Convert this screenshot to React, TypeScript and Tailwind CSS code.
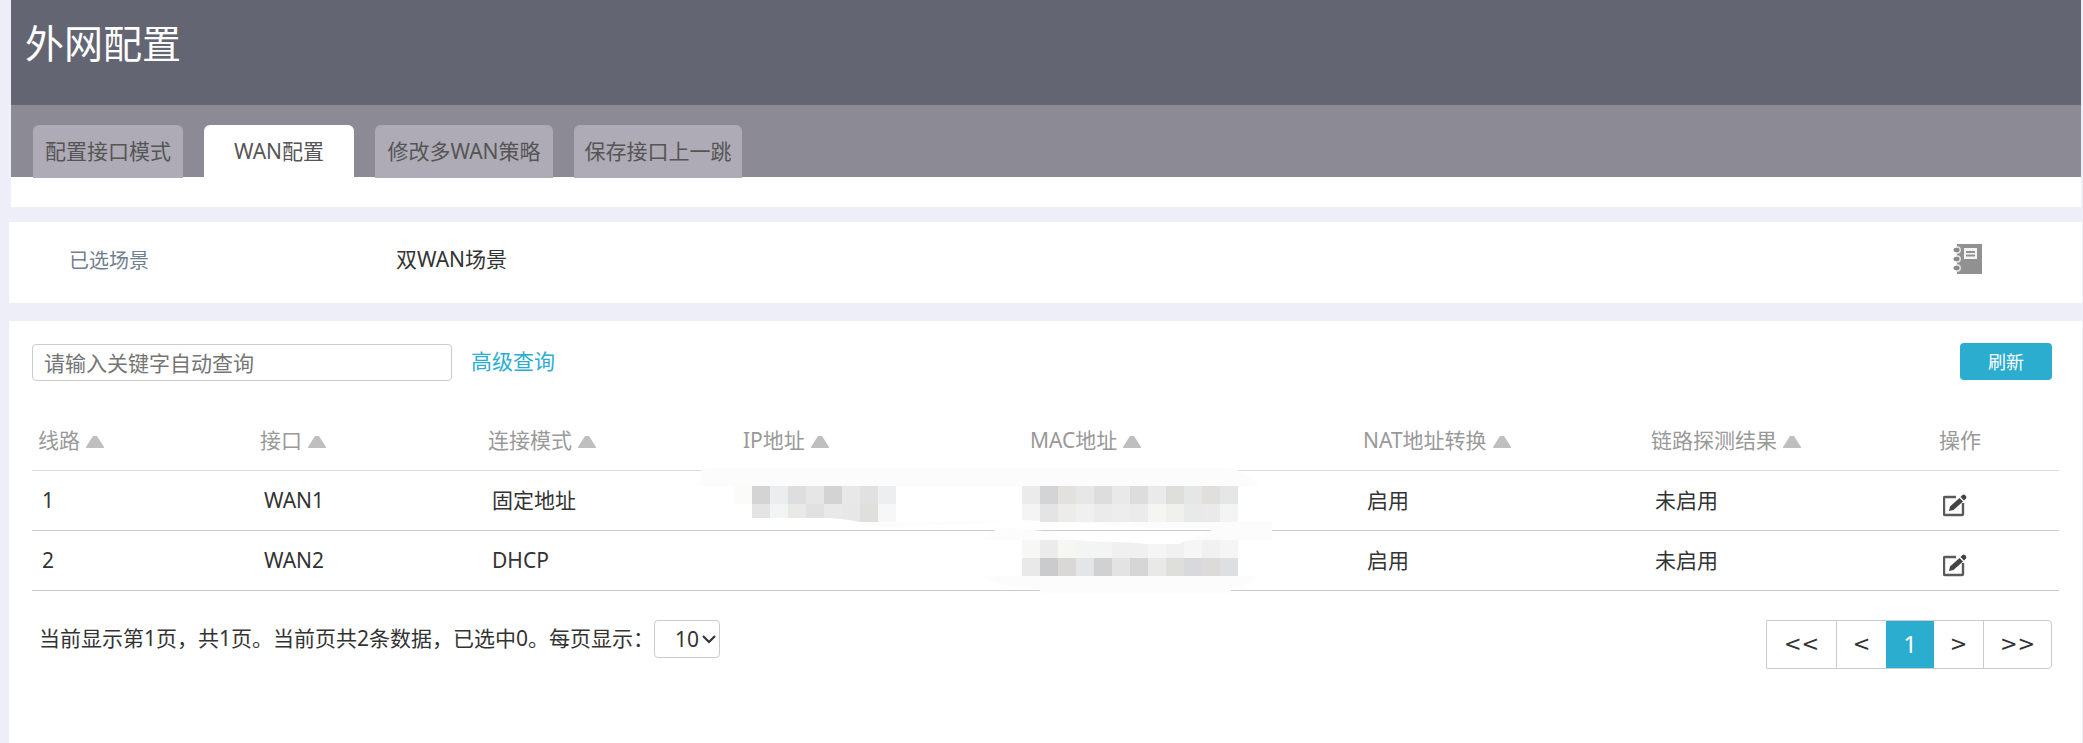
import React, { useState } from 'react';

const tabs = [
  { id: 'mode', label: '配置接口模式', width: 'w-[150px]' },
  { id: 'wan', label: 'WAN配置', width: 'w-[150px]' },
  { id: 'policy', label: '修改多WAN策略', width: 'w-[178px]' },
  { id: 'nexthop', label: '保存接口上一跳', width: 'w-[168px]' },
];

const columns = [
  { label: '线路', width: 'w-[222px]' },
  { label: '接口', width: 'w-[228px]' },
  { label: '连接模式', width: 'w-[255px]' },
  { label: 'IP地址', width: 'w-[287px]' },
  { label: 'MAC地址', width: 'w-[333px]' },
  { label: 'NAT地址转换', width: 'w-[288px]' },
  { label: '链路探测结果', width: 'w-[288px]' },
];

const rows = [
  { line: 1, port: 'WAN1', mode: '固定地址', nat: '启用', probe: '未启用' },
  { line: 2, port: 'WAN2', mode: 'DHCP', nat: '启用', probe: '未启用' },
];

const ipTiles = [
  ['#fbfcfa', '#d4d4d4', '#ebedef', '#dedede', '#e6e6e6', '#d3d3d3', '#e8e8e8', '#e1e1e1', '#edeef0'],
  ['none', '#e4e4e4', '#f2f5f4', '#e9eae8', '#e1e1e1', '#e7eae9', '#e7e7e7', '#dfdfdc', '#f7f7f7'],
];

const macTiles = [
  ['#ebebeb', '#d2d4d6', '#e3e1de', '#e7e7e7', '#dddddd', '#e9e9e9', '#dddddd', '#eaeaea', '#dededa', '#e4e7e6', '#e1dfdc', '#e5e6e8'],
  ['#f4f4f4', '#e4e4e4', '#ececea', '#f0f0f0', '#ebebeb', '#ededeb', '#ebebeb', '#f5f5f2', '#f0f0ed', '#e7eae9', '#eaeaea', '#f2f5f4'],
  ['#f7f7f5', '#ebebeb', '#f6f6f3', '#f3f5f5', '#f4f4f4', '#f0f0f0', '#f0f0f0', '#f5f5f5', '#f1f1f1', '#f6f6f6', '#f1f1f1', '#f5f5f5'],
  ['#e9e9e9', '#c9cbcc', '#dad8d6', '#e3e5e6', '#d1d1d1', '#e3e3e3', '#d6d6d6', '#e9e9e7', '#dededb', '#d7d9dc', '#dddbd9', '#dddfe1'],
];

const Tiles = ({ x, y, tiles }: { x: number; y: number; tiles: string[][] }) => (
  <g shapeRendering="crispEdges">
    {tiles.map((line, r) =>
      line.map((fill, c) => <rect key={`${r}-${c}`} x={x + c * 18} y={y + r * 18} width="18" height="18" fill={fill} />)
    )}
  </g>
);

// Hides the addresses of both rows
const AddressMask = () => (
  <svg
    className="absolute -left-10 -top-2 max-w-none pointer-events-none"
    width="580"
    height="132"
    viewBox="0 0 580 132"
    aria-hidden="true"
  >
    <g fill="#fcfcfc">
      <path d="M2 23L5 6Q20 4 60 5H530Q550 7 562 23z" />
      <path d="M163 59Q178 64 192 64L292 60 395 59H575V77H490L515 67V65H455L395 60 325 59z" />
      <path d="M286 77Q294 68 299 67L312 64 325 66 357 69Q372 72 379 77z" />
      <path d="M286 113H562Q550 124 535 126L532 130H345L342 126Q300 124 286 113z" />
    </g>
    <Tiles x={37} y={23} tiles={ipTiles} />
    <Tiles x={325} y={23} tiles={macTiles.slice(0, 2)} />
    <Tiles x={325} y={77} tiles={macTiles.slice(2)} />
    <g fill="#fff">
      <path d="M55 55H125Q145 55 163 59H55z" />
      <path d="M379 77Q400 79 415 79T452 81H482Q488 77 495 77z" />
      <path d="M325 57L343 58V59H325z" />
    </g>
  </svg>
);

const SortArrow = () => (
  <svg className="inline-block ml-1.5" width="18" height="12" viewBox="0 0 18 12" aria-hidden="true">
    <path d="M7 0h4l7 11v1H0v-1z" fill="#bfbfbf" />
  </svg>
);

const EditIcon = () => (
  <svg width="24" height="24" viewBox="0 0 24 24" aria-hidden="true">
    <path d="M13 4H2q-1 0-1 1v16q0 1 1 1h17q1 0 1-1V10" fill="none" stroke="#5a5a5a" strokeWidth="2.4" />
    <path d="M6 18l1-4.500L16.500 5l3.500 3.500L10.500 17zM17.500 4l2-2q1.500-1 3 .5t.5 3l-2 2z" fill="#444" />
  </svg>
);

const NotebookIcon = () => (
  <svg width="29" height="30" viewBox="0 0 29 30" aria-hidden="true">
    <path d="M4 0h25v30H4z" fill="#919191" />
    <path d="M11 4h13v11H11z" fill="#f4f4f4" />
    <path d="M13 8h9M13 11.500h9" stroke="#919191" strokeWidth="2" />
    {[6, 15, 24].map((cy) => (
      <g key={cy}>
        <path d={`M3 ${cy - 4}q5 0 5 4t-5 4z`} fill="#e4e4e4" />
        <ellipse cx="3.500" cy={cy} rx="3" ry="2.200" fill="#8a8a8a" />
      </g>
    ))}
  </svg>
);

const App: React.FC = () => {
  const [activeTab, setActiveTab] = useState('wan');
  const [keyword, setKeyword] = useState('');

  return (
    <div className="min-h-screen bg-[#eeeef8] flex flex-col font-['Noto_Sans','Noto_Sans_CJK_SC',sans-serif] text-[21px] leading-7 text-[#333]">
      <header className="ml-[11px] mr-0.5 bg-white pb-[30px]">
        <div className="h-[105px] bg-[#646572] px-3.5 pt-3.5">
          <h1 className="text-[39px] leading-[58px] font-normal text-white">外网配置</h1>
        </div>
        <nav className="h-[72px] bg-[#8c8a94] flex items-start gap-[21px] px-[22px] pt-5">
          {tabs.map((tab) => (
            <button
              key={tab.id}
              onClick={() => setActiveTab(tab.id)}
              className={`h-[53px] pb-0.5 shrink-0 rounded-t-md whitespace-nowrap text-[#555] ${tab.width} ${
                activeTab === tab.id ? 'bg-white' : 'bg-[#aeabb6]'
              }`}
            >
              {tab.label}
            </button>
          ))}
        </nav>
      </header>

      <section className="ml-[9px] mr-px mt-[15px] h-[81px] bg-white flex items-center pl-[60px] pr-[100px] pb-2">
        <span className="w-[327px] pt-1 text-[20px] text-[#708090]">已选场景</span>
        <span>双WAN场景</span>
        <button className="ml-auto" aria-label="场景说明">
          <NotebookIcon />
        </button>
      </section>

      <main className="ml-[9px] mr-px mt-[18px] flex-1 bg-white pl-[23px] pr-6 pt-[22px]">
        <div className="flex items-start pr-[6px]">
          <input
            type="text"
            aria-label="关键字"
            value={keyword}
            onChange={(e) => setKeyword(e.target.value)}
            placeholder="请输入关键字自动查询"
            className="mt-px w-[420px] h-[37px] px-[11px] border border-[#ccc] rounded-sm placeholder:text-[#757575]"
          />
          <a href="#advanced" className="ml-[19px] mt-1 text-[#2badd2]">高级查询</a>
          <button className="ml-auto w-[92px] h-[37px] rounded-sm bg-[#2badd0] text-lg text-white">刷新</button>
        </div>

        <table className="mt-[29px] w-full table-fixed text-left">
          <thead>
            <tr className="h-[60px] border-b border-[#ddd] text-[#999]">
              {columns.map((col) => (
                <th key={col.label} className={`pl-1.5 font-normal whitespace-nowrap ${col.width}`}>
                  {col.label}
                  <SortArrow />
                </th>
              ))}
              <th className="w-[126px] pl-1.5 font-normal">操作</th>
            </tr>
          </thead>
          <tbody>
            {rows.map((row, i) => (
              <tr key={row.line} className="h-[60px] border-b border-[#ccc]">
                <td className="pl-2.5">{row.line}</td>
                <td className="pl-2.5">{row.port}</td>
                <td className="pl-2.5">{row.mode}</td>
                <td className="relative">{i === 0 && <AddressMask />}</td>
                <td />
                <td className="pl-2.5">{row.nat}</td>
                <td className="pl-2.5">{row.probe}</td>
                <td className="pl-2.5">
                  <button className="block mt-2.5" aria-label={`编辑 ${row.port}`}>
                    <EditIcon />
                  </button>
                </td>
              </tr>
            ))}
          </tbody>
        </table>

        <div className="mt-[29px] flex items-start pl-[7px] pr-[6px]">
          <label htmlFor="page-size" className="mt-1">当前显示第1页，共1页。当前页共2条数据，已选中0。每页显示：</label>
          <div className="relative">
            <select id="page-size" className="appearance-none w-[66px] h-[38px] pl-5 border border-[#ccc] rounded-sm bg-white">
              <option>10</option>
              <option>20</option>
              <option>50</option>
            </select>
            <svg className="absolute right-1 top-3.5 pointer-events-none" width="14" height="10" viewBox="0 0 14 10" aria-hidden="true">
              <path d="M1 2l6 6 6-6" fill="none" stroke="#333" strokeWidth="2.200" />
            </svg>
          </div>
          <nav className="ml-auto flex h-[49px] border border-[#ccc] rounded-r-sm" aria-label="分页">
            <button className="w-[70px] border-r border-[#ccc] font-['DejaVu_Sans',sans-serif]">&lt;&lt;</button>
            <button className="w-[49px] font-['DejaVu_Sans',sans-serif]">&lt;</button>
            <button className="w-[48px] bg-[#2badd0] text-2xl text-white">1</button>
            <button className="w-[50px] border-r border-[#ccc] font-['DejaVu_Sans',sans-serif]">&gt;</button>
            <button className="w-[67px] font-['DejaVu_Sans',sans-serif]">&gt;&gt;</button>
          </nav>
        </div>
      </main>
    </div>
  );
};

export default App;
